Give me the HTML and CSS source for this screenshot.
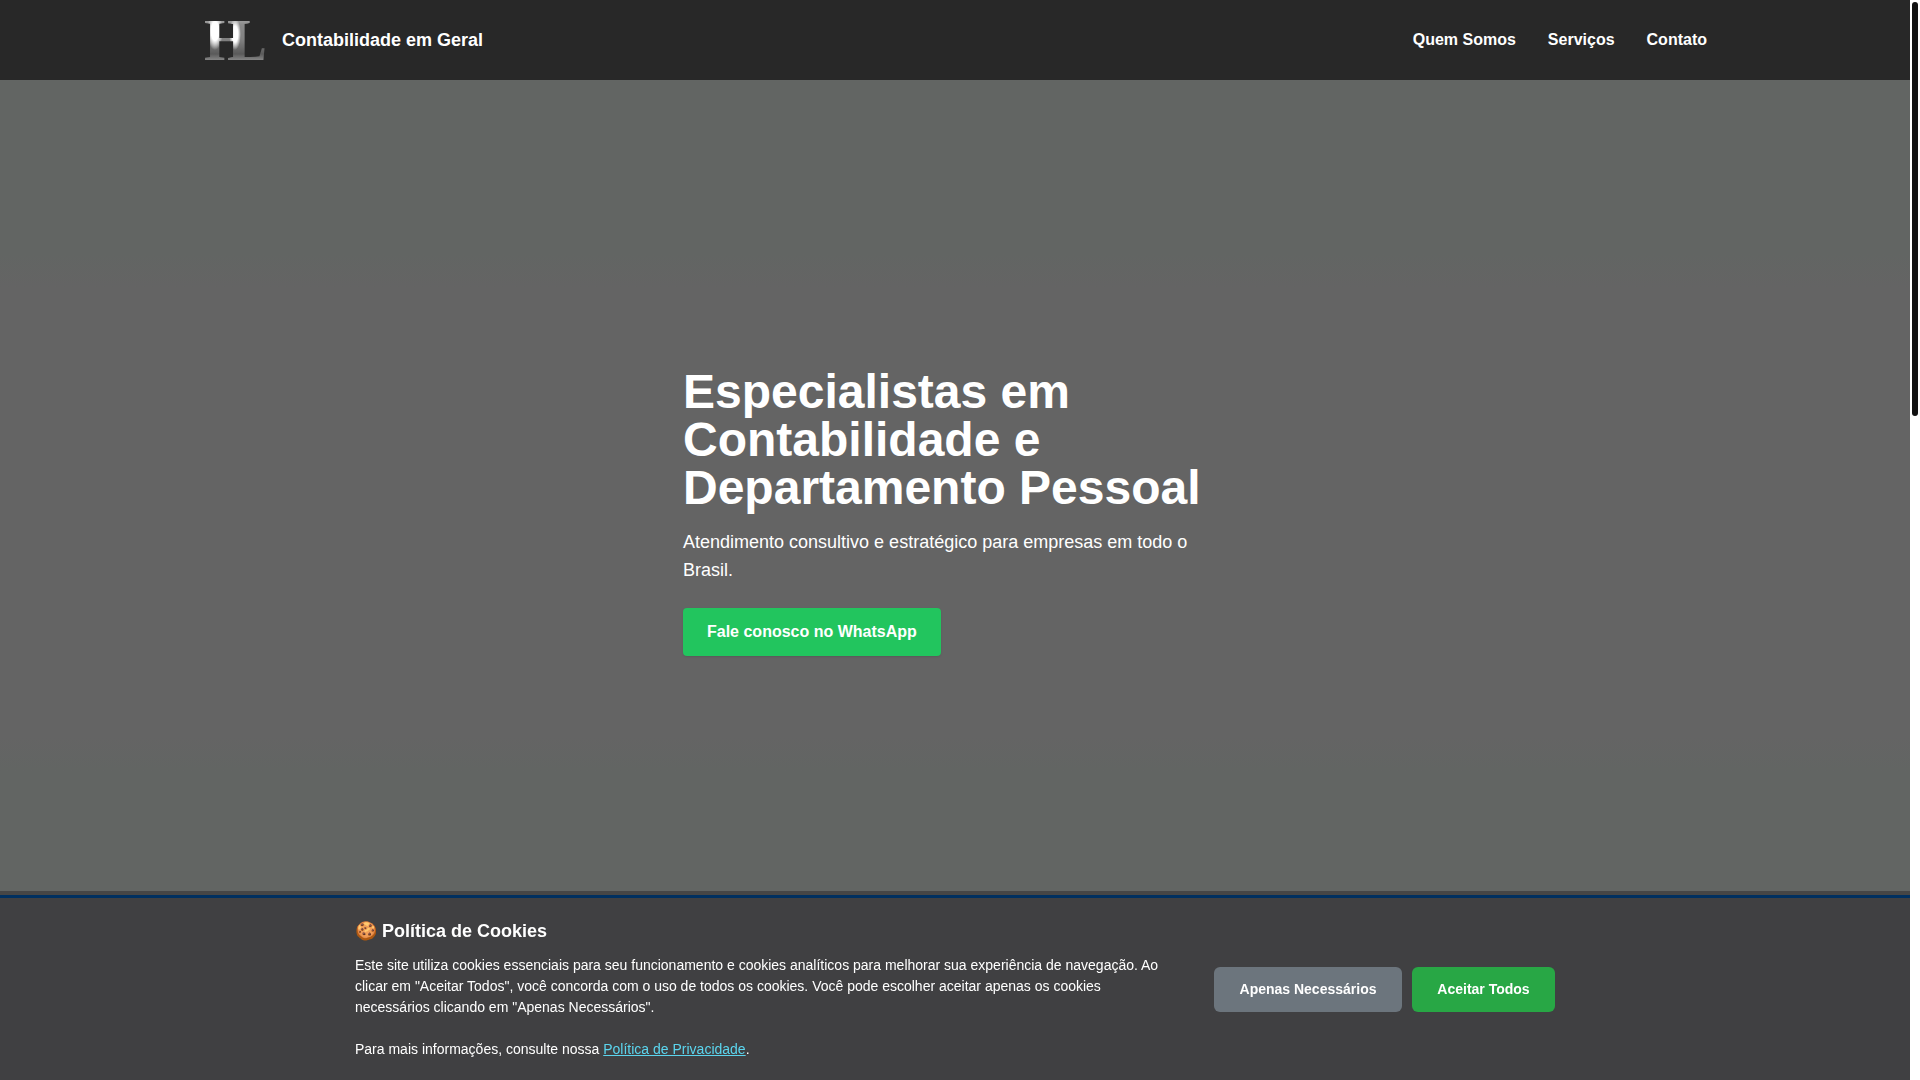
FILE: index.html
```html
<!DOCTYPE html>
<html lang="pt-BR">
<head>
<meta charset="utf-8">
<meta name="viewport" content="width=device-width, initial-scale=1">
<title>Contabilidade em Geral</title>
<link rel="stylesheet" href="styles.css">
</head>
<body>
<div class="page">
  <header class="header">
    <div class="header-inner">
      <a class="brand" href="#inicio">
        <svg class="logo" viewBox="0 0 64 48" role="img" aria-label="HL">
          <defs>
            <linearGradient id="metal" x1="0" y1="0" x2="0" y2="1">
              <stop offset="0" stop-color="#a0a0a0"/>
              <stop offset=".12" stop-color="#8a8a8a"/>
              <stop offset=".5" stop-color="#808080"/>
              <stop offset=".85" stop-color="#5a5a5a"/>
              <stop offset="1" stop-color="#858585"/>
            </linearGradient>
            <radialGradient id="shine">
              <stop offset="0" stop-color="#fff"/>
              <stop offset=".5" stop-color="#fff"/>
              <stop offset="1" stop-color="#fff" stop-opacity="0"/>
            </radialGradient>
            <pattern id="chrome" patternUnits="userSpaceOnUse" width="64" height="48">
              <rect y="4" width="64" height="40" fill="url(#metal)"/>
              <ellipse cx="12" cy="15" rx="8" ry="19" fill="url(#shine)"/>
              <ellipse cx="32" cy="18" rx="6" ry="16" fill="url(#shine)"/>
            </pattern>
          </defs>
          <text class="logo-letters" x="1 24" y="44" fill="url(#chrome)">HL</text>
        </svg>
        <span>Contabilidade em Geral</span>
      </a>
      <nav class="nav">
        <a href="#quem-somos">Quem Somos</a>
        <a href="#servicos">Serviços</a>
        <a href="#contato">Contato</a>
      </nav>
    </div>
  </header>
  <main class="hero" id="inicio">
    <div class="hero-content">
      <h1>Especialistas em Contabilidade e Departamento Pessoal</h1>
      <p>Atendimento consultivo e estratégico para empresas em todo o Brasil.</p>
      <a class="cta" href="#whatsapp">Fale conosco no WhatsApp</a>
    </div>
  </main>
</div>
<div class="scroll-track" aria-hidden="true"><div class="scroll-thumb"></div></div>
<section class="cookies" aria-labelledby="cookies-title">
  <div class="cookies-inner">
    <div class="cookies-text">
      <h2 id="cookies-title">🍪 Política de Cookies</h2>
      <p>Este site utiliza cookies essenciais para seu funcionamento e cookies analíticos para melhorar sua experiência de navegação. Ao clicar em "Aceitar Todos", você concorda com o uso de todos os cookies. Você pode escolher aceitar apenas os cookies necessários clicando em "Apenas Necessários".<br><br>Para mais informações, consulte nossa <a href="#privacidade">Política de Privacidade</a>.</p>
    </div>
    <div class="cookies-actions">
      <button class="btn btn-secondary" type="button">Apenas Necessários</button>
      <button class="btn btn-accept" type="button">Aceitar Todos</button>
    </div>
  </div>
</section>
</body>
</html>
```
FILE: styles.css
```css
* {
  box-sizing: border-box;
}

body {
  margin: 0;
  height: 100vh;
  overflow: hidden;
  display: grid;
  grid-template-columns: 1fr 10px;
  font-family: "Liberation Sans", Arial, sans-serif;
  font-size: 16px;
  line-height: 24px;
  color: #fff;
}

h1, h2, p {
  margin: 0;
}

.page {
  min-width: 0;
}

.header {
  background: #282828;
}

.header-inner {
  max-width: 1536px;
  min-height: 80px;
  margin: 0 auto;
  padding: 16px;
  display: flex;
  align-items: center;
  justify-content: space-between;
}

.header a {
  color: #fff;
  font-weight: 700;
  text-decoration: none;
}

.brand {
  display: flex;
  align-items: center;
  gap: 15px;
  font-size: 18px;
}

.logo {
  width: 64px;
  height: 48px;
  overflow: visible;
}

.logo-letters {
  font-family: "Liberation Serif", "Times New Roman", serif;
  font-size: 60px;
  font-weight: 700;
}

.nav {
  display: flex;
  gap: 32px;
}

.hero {
  min-height: 80vh;
  display: flex;
  align-items: center;
  justify-content: center;
  background: linear-gradient(#626563 0, #626563 20%, #646464 24%, #646464 76%, #626563 80%);
}

.hero-content {
  max-width: 576px;
  padding: 0 16px;
}

.hero h1 {
  margin-bottom: 16px;
  font-size: 48px;
  line-height: 48px;
}

.hero p {
  margin-bottom: 24px;
  font-size: 18px;
  line-height: 28px;
}

.cta {
  display: inline-block;
  padding: 12px 24px;
  border-radius: 4px;
  background: #22c55e;
  box-shadow: 0 1px 2px rgba(0, 0, 0, .1);
  color: #fff;
  font-weight: 700;
  text-decoration: none;
  vertical-align: top;
}

.scroll-track {
  padding: 2px;
  background: #fff;
}

.scroll-thumb {
  height: 414px;
  border-radius: 3px;
  background: #111;
}

.cookies {
  position: fixed;
  left: 0;
  right: 10px;
  bottom: 0;
  padding: 20px;
  border-top: 3px solid #003060;
  background: #404042;
  box-shadow: 0 -4px 0 #464646;
}

.cookies-inner {
  max-width: 1200px;
  margin: 0 auto;
  display: flex;
  align-items: center;
  gap: 40px;
}

.cookies-text {
  flex: 1;
}

.cookies h2 {
  margin-bottom: 10px;
  font-size: 18px;
  line-height: 27px;
}

.cookies p {
  font-size: 14px;
  line-height: 21px;
}

.cookies p a {
  color: #5bd5ee;
}

.cookies-actions {
  display: flex;
  gap: 10px;
}

.btn {
  padding: 12px 24px;
  border: 0;
  border-radius: 6px;
  color: #fff;
  font: 700 14px/21px "Liberation Sans", Arial, sans-serif;
}

.btn-secondary {
  min-width: 188px;
  background: #6c757d;
}

.btn-accept {
  min-width: 143px;
  background: #28a745;
}
```
